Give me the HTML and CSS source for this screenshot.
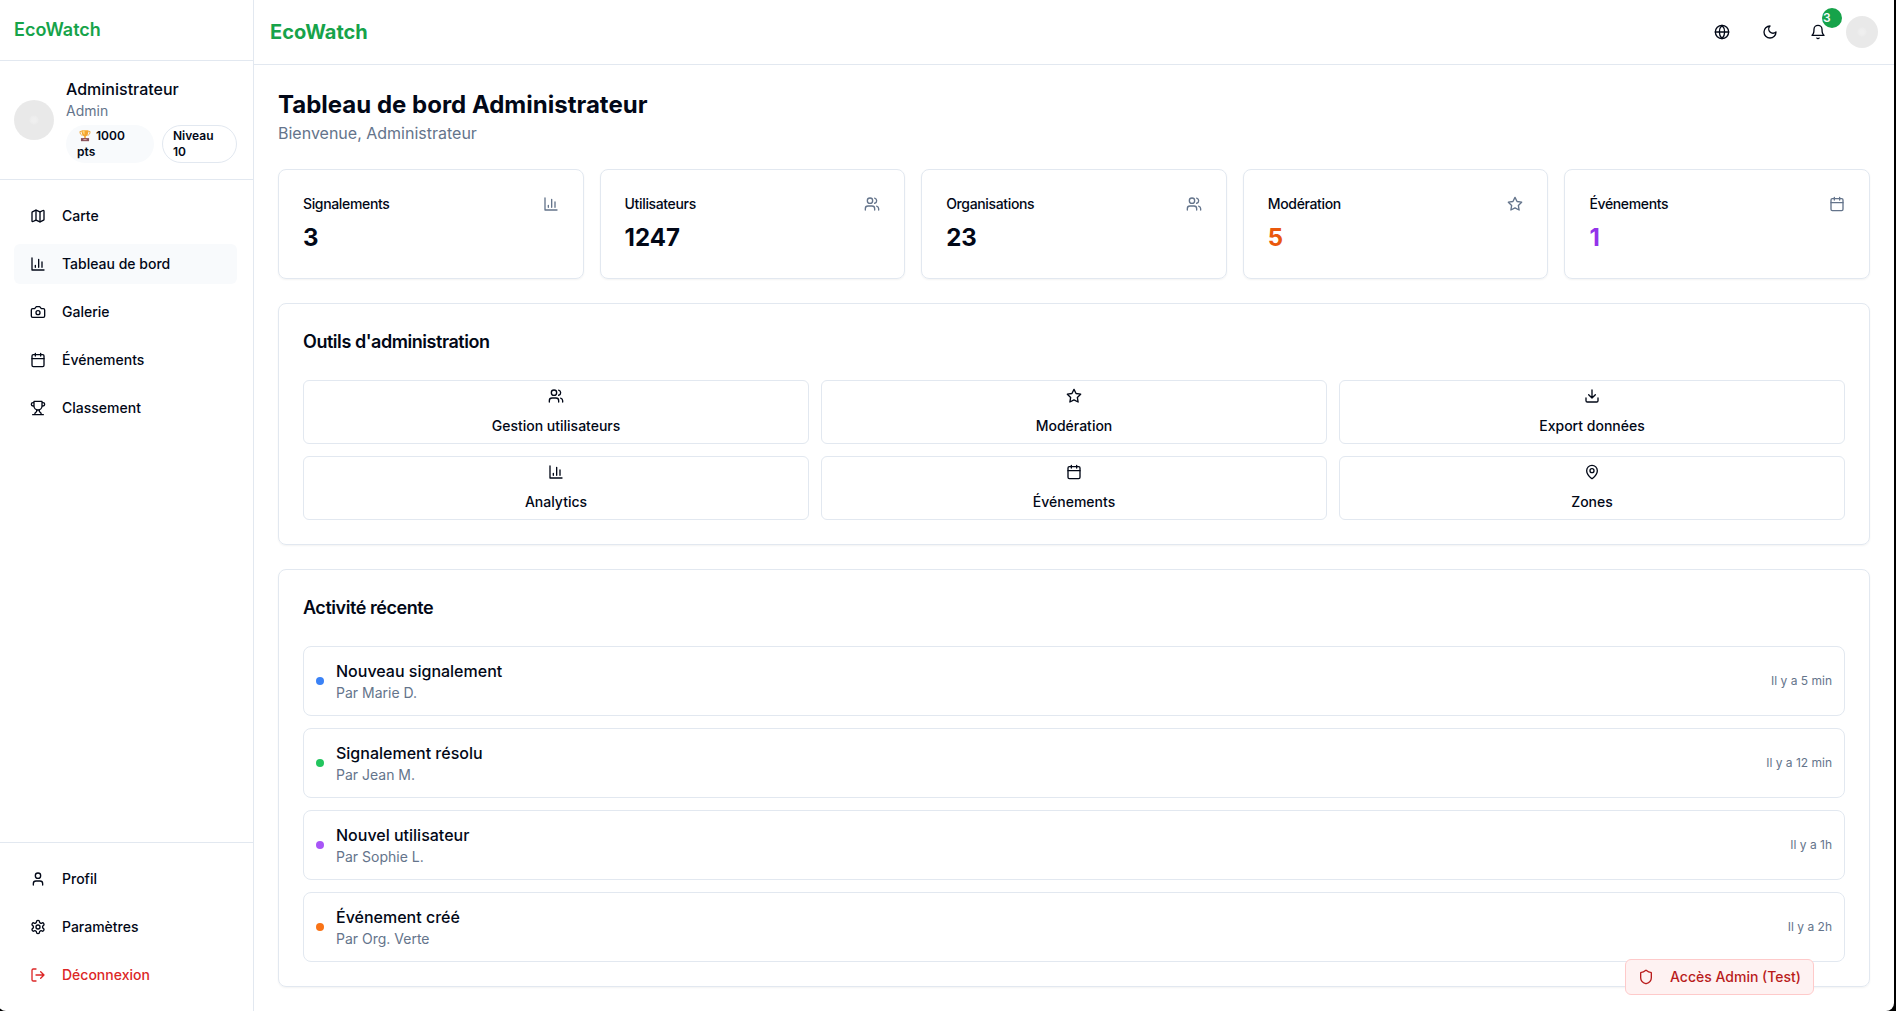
FILE: index.html
```html
<!DOCTYPE html>
<html lang="fr">
<head>
<meta charset="utf-8">
<title>EcoWatch</title>
<link rel="stylesheet" href="styles.css">
</head>
<body>
<svg class="sprite" aria-hidden="true">
  <symbol id="map" viewBox="0 0 24 24"><path d="M14.106 5.553a2 2 0 0 0 1.788 0l3.659-1.83A1 1 0 0 1 21 4.619v12.764a1 1 0 0 1-.553.894l-4.553 2.277a2 2 0 0 1-1.788 0l-4.212-2.106a2 2 0 0 0-1.788 0l-3.659 1.83A1 1 0 0 1 3 19.381V6.618a1 1 0 0 1 .553-.894l4.553-2.277a2 2 0 0 1 1.788 0z"/><path d="M15 5.764v15M9 3.236v15"/></symbol>
  <symbol id="chart" viewBox="0 0 24 24"><path d="M3 3v18h18M18 17V9M13 17V5M8 17v-3"/></symbol>
  <symbol id="camera" viewBox="0 0 24 24"><path d="M14.5 4h-5L7 7H4a2 2 0 0 0-2 2v9a2 2 0 0 0 2 2h16a2 2 0 0 0 2-2V9a2 2 0 0 0-2-2h-3l-2.500-3z"/><circle cx="12" cy="13" r="3"/></symbol>
  <symbol id="calendar" viewBox="0 0 24 24"><path d="M8 2v4M16 2v4"/><rect width="18" height="18" x="3" y="4" rx="2"/><path d="M3 10h18"/></symbol>
  <symbol id="trophy" viewBox="0 0 24 24"><path d="M6 9H4.500a2.500 2.500 0 0 1 0-5H6M18 9h1.500a2.500 2.500 0 0 0 0-5H18M4 22h16M10 14.660V17c0 .55-.47.98-.97 1.210C7.850 18.750 7 20.240 7 22M14 14.660V17c0 .55.47.98.97 1.210C16.150 18.750 17 20.240 17 22M18 2H6v7a6 6 0 0 0 12 0V2Z"/></symbol>
  <symbol id="user" viewBox="0 0 24 24"><path d="M19 21v-2a4 4 0 0 0-4-4H9a4 4 0 0 0-4 4v2"/><circle cx="12" cy="7" r="4"/></symbol>
  <symbol id="settings" viewBox="0 0 24 24"><path d="M12.220 2h-.44a2 2 0 0 0-2 2v.18a2 2 0 0 1-1 1.730l-.43.25a2 2 0 0 1-2 0l-.15-.08a2 2 0 0 0-2.730.73l-.22.38a2 2 0 0 0 .73 2.730l.15.1a2 2 0 0 1 1 1.720v.51a2 2 0 0 1-1 1.740l-.15.09a2 2 0 0 0-.73 2.730l.22.38a2 2 0 0 0 2.730.73l.15-.08a2 2 0 0 1 2 0l.43.25a2 2 0 0 1 1 1.730V20a2 2 0 0 0 2 2h.44a2 2 0 0 0 2-2v-.18a2 2 0 0 1 1-1.730l.43-.25a2 2 0 0 1 2 0l.15.08a2 2 0 0 0 2.730-.73l.22-.39a2 2 0 0 0-.73-2.730l-.15-.08a2 2 0 0 1-1-1.740v-.5a2 2 0 0 1 1-1.740l.15-.09a2 2 0 0 0 .73-2.730l-.22-.38a2 2 0 0 0-2.730-.73l-.15.08a2 2 0 0 1-2 0l-.43-.25a2 2 0 0 1-1-1.730V4a2 2 0 0 0-2-2z"/><circle cx="12" cy="12" r="3"/></symbol>
  <symbol id="logout" viewBox="0 0 24 24"><path d="M9 21H5a2 2 0 0 1-2-2V5a2 2 0 0 1 2-2h4M16 17l5-5-5-5M21 12H9"/></symbol>
  <symbol id="globe" viewBox="0 0 24 24"><circle cx="12" cy="12" r="10"/><path d="M12 2a14.500 14.500 0 0 0 0 20 14.500 14.500 0 0 0 0-20M2 12h20"/></symbol>
  <symbol id="moon" viewBox="0 0 24 24"><path d="M12 3a6 6 0 0 0 9 9 9 9 0 1 1-9-9Z"/></symbol>
  <symbol id="bell" viewBox="0 0 24 24"><path d="M6 8a6 6 0 0 1 12 0c0 7 3 9 3 9H3s3-2 3-9M10.300 21a1.940 1.940 0 0 0 3.400 0"/></symbol>
  <symbol id="users" viewBox="0 0 24 24"><path d="M16 21v-2a4 4 0 0 0-4-4H6a4 4 0 0 0-4 4v2"/><circle cx="9" cy="7" r="4"/><path d="M22 21v-2a4 4 0 0 0-3-3.870M16 3.130a4 4 0 0 1 0 7.750"/></symbol>
  <symbol id="star" viewBox="0 0 24 24"><path d="M12 2l3.090 6.260L22 9.270l-5 4.870 1.180 6.880L12 17.770l-6.180 3.250L7 14.140 2 9.270l6.910-1.010z"/></symbol>
  <symbol id="download" viewBox="0 0 24 24"><path d="M21 15v4a2 2 0 0 1-2 2H5a2 2 0 0 1-2-2v-4M7 10l5 5 5-5M12 15V3"/></symbol>
  <symbol id="pin" viewBox="0 0 24 24"><path d="M20 10c0 4.993-5.539 10.193-7.399 11.799a1 1 0 0 1-1.202 0C9.539 20.193 4 14.993 4 10a8 8 0 0 1 16 0"/><circle cx="12" cy="10" r="3"/></symbol>
  <symbol id="shield" viewBox="0 0 24 24"><path d="M20 13c0 5-3.500 7.500-7.660 8.950a1 1 0 0 1-.67-.01C7.500 20.500 4 18 4 13V6a1 1 0 0 1 1-1c2 0 4.500-1.200 6.240-2.720a1.170 1.170 0 0 1 1.520 0C14.510 3.810 17 5 19 5a1 1 0 0 1 1 1z"/></symbol>
</svg>

<div class="app">
  <aside class="sidebar">
    <div class="sidebar-brand">EcoWatch</div>
    <div class="profile">
      <span class="avatar avatar-md"></span>
      <div class="profile-info">
        <div class="profile-name">Administrateur</div>
        <div class="profile-role">Admin</div>
        <div class="badges">
          <span class="badge badge-points"><svg class="cup" viewBox="0 0 16 16"><path d="M4 3H1.800c0 3 1 4.500 3.200 4.700M12 3h2.200c0 3-1 4.500-3.200 4.700" fill="none" stroke="#eea83c" stroke-width="1.200"/><path d="M3.700 1.500h8.600C12.300 6 11 8.500 9 9v2h1.500v1h-5v-1H7V9C5 8.500 3.700 6 3.700 1.500z" fill="#f5a62f"/><path d="M5 2h2.500v5C5.800 6 5 4.500 5 2z" fill="#ffd578"/><path d="M3 11.200h10V15H3z" fill="#87505b"/><path d="M6 12.300h4v1.400H6z" fill="#d9a3a0"/></svg> 1000 pts</span>
          <span class="badge badge-level">Niveau 10</span>
        </div>
      </div>
    </div>
    <nav class="nav nav-main">
      <a class="nav-item"><svg class="icon"><use href="#map"/></svg>Carte</a>
      <a class="nav-item active"><svg class="icon"><use href="#chart"/></svg>Tableau de bord</a>
      <a class="nav-item"><svg class="icon"><use href="#camera"/></svg>Galerie</a>
      <a class="nav-item"><svg class="icon"><use href="#calendar"/></svg>Événements</a>
      <a class="nav-item"><svg class="icon"><use href="#trophy"/></svg>Classement</a>
    </nav>
    <nav class="nav nav-footer">
      <a class="nav-item"><svg class="icon"><use href="#user"/></svg>Profil</a>
      <a class="nav-item"><svg class="icon"><use href="#settings"/></svg>Paramètres</a>
      <a class="nav-item danger"><svg class="icon"><use href="#logout"/></svg>Déconnexion</a>
    </nav>
  </aside>

  <div class="page">
    <header class="topbar">
      <div class="topbar-brand">EcoWatch</div>
      <div class="topbar-actions">
        <button class="icon-button"><svg class="icon"><use href="#globe"/></svg></button>
        <button class="icon-button"><svg class="icon"><use href="#moon"/></svg></button>
        <button class="icon-button"><svg class="icon"><use href="#bell"/></svg><span class="count">3</span></button>
        <span class="avatar avatar-sm"></span>
      </div>
    </header>

    <main class="content">
      <div class="heading">
        <h1>Tableau de bord Administrateur</h1>
        <p>Bienvenue, Administrateur</p>
      </div>

      <section class="stats">
        <div class="card stat"><div class="stat-head">Signalements<svg class="icon"><use href="#chart"/></svg></div><div class="stat-value">3</div></div>
        <div class="card stat"><div class="stat-head">Utilisateurs<svg class="icon"><use href="#users"/></svg></div><div class="stat-value">1247</div></div>
        <div class="card stat"><div class="stat-head">Organisations<svg class="icon"><use href="#users"/></svg></div><div class="stat-value">23</div></div>
        <div class="card stat"><div class="stat-head">Modération<svg class="icon"><use href="#star"/></svg></div><div class="stat-value orange">5</div></div>
        <div class="card stat"><div class="stat-head">Événements<svg class="icon"><use href="#calendar"/></svg></div><div class="stat-value purple">1</div></div>
      </section>

      <section class="card">
        <h2>Outils d'administration</h2>
        <div class="tools">
          <button class="tool"><svg class="icon"><use href="#users"/></svg>Gestion utilisateurs</button>
          <button class="tool"><svg class="icon"><use href="#star"/></svg>Modération</button>
          <button class="tool"><svg class="icon"><use href="#download"/></svg>Export données</button>
          <button class="tool"><svg class="icon"><use href="#chart"/></svg>Analytics</button>
          <button class="tool"><svg class="icon"><use href="#calendar"/></svg>Événements</button>
          <button class="tool"><svg class="icon"><use href="#pin"/></svg>Zones</button>
        </div>
      </section>

      <section class="card">
        <h2>Activité récente</h2>
        <div class="activity">
          <div class="event"><span class="dot dot-blue"></span><div class="event-text"><div class="event-title">Nouveau signalement</div><div class="event-author">Par Marie D.</div></div><time>Il y a 5 min</time></div>
          <div class="event"><span class="dot dot-green"></span><div class="event-text"><div class="event-title">Signalement résolu</div><div class="event-author">Par Jean M.</div></div><time>Il y a 12 min</time></div>
          <div class="event"><span class="dot dot-purple"></span><div class="event-text"><div class="event-title">Nouvel utilisateur</div><div class="event-author">Par Sophie L.</div></div><time>Il y a 1h</time></div>
          <div class="event"><span class="dot dot-orange"></span><div class="event-text"><div class="event-title">Événement créé</div><div class="event-author">Par Org. Verte</div></div><time>Il y a 2h</time></div>
        </div>
      </section>
    </main>
  </div>
</div>

<button class="admin-access"><svg class="icon"><use href="#shield"/></svg>Accès Admin (Test)</button>
</body>
</html>
```
FILE: styles.css
```css
*,
*::before,
*::after {
  box-sizing: border-box;
}

body {
  margin: 0;
  background: #000;
  color: #020817;
  font-family: Inter, "Liberation Sans", sans-serif;
  font-size: 16px;
  line-height: 24px;
}

h1, h2, p {
  margin: 0;
}

button {
  font: inherit;
  color: inherit;
  background: none;
  border: 0;
  padding: 0;
}

.sprite {
  display: none;
}

.icon {
  width: 16px;
  height: 16px;
  flex: none;
  fill: none;
  stroke: currentColor;
  stroke-width: 2;
  stroke-linecap: round;
  stroke-linejoin: round;
}

.app {
  display: flex;
  width: 1896px;
  height: 1011px;
  margin-left: -2px;
  background: #fff;
  border-radius: 0 0 8px 8px;
  overflow: hidden;
}

/* Sidebar */
.sidebar {
  display: flex;
  flex-direction: column;
  flex: none;
  width: 256px;
  border-right: 1px solid #e2e8f0;
}

.sidebar-brand {
  padding: 16px;
  border-bottom: 1px solid #e2e8f0;
  color: #16a34a;
  font-size: 18px;
  font-weight: 600;
  line-height: 28px;
}

.profile {
  display: flex;
  align-items: center;
  gap: 12px;
  padding: 16px;
  border-bottom: 1px solid #e2e8f0;
}

.avatar {
  flex: none;
  border-radius: 50%;
  background: radial-gradient(circle, #efefef 0 2px, #ececec 4px, #e9e9e9 5px);
}

.avatar-md {
  width: 40px;
  height: 40px;
}

.avatar-sm {
  width: 32px;
  height: 32px;
}

.profile-name {
  font-weight: 500;
}

.profile-role {
  color: #64748b;
  font-size: 14px;
  line-height: 20px;
}

.badges {
  display: flex;
  gap: 8px;
  margin-top: 4px;
}

.badge {
  padding: 2px 10px;
  border: 1px solid transparent;
  border-radius: 19px;
  font-size: 12px;
  font-weight: 600;
  line-height: 16px;
}

.badge-points {
  width: 88px;
  background: #f8fafc;
}

.badge-level {
  width: 75px;
  border-color: #e2e8f0;
}

.cup {
  width: 16px;
  height: 13px;
  vertical-align: -2px;
}

.nav {
  display: flex;
  flex-direction: column;
  gap: 8px;
  padding: 16px;
}

.nav-main {
  flex: 1;
}

.nav-footer {
  border-top: 1px solid #e2e8f0;
}

.nav-item {
  display: flex;
  align-items: center;
  gap: 16px;
  height: 40px;
  padding: 0 16px;
  border-radius: 6px;
  font-size: 14px;
  font-weight: 500;
}

.nav-item.active {
  background: #f8fafc;
}

.nav-item.danger {
  color: #dc2626;
}

/* Top bar */
.page {
  flex: 1;
}

.topbar {
  display: flex;
  align-items: center;
  justify-content: space-between;
  height: 65px;
  padding: 0 16px;
  border-bottom: 1px solid #e2e8f0;
}

.topbar-brand {
  color: #16a34a;
  font-size: 20px;
  font-weight: 700;
  line-height: 28px;
}

.topbar-actions {
  display: flex;
  align-items: center;
  gap: 8px;
}

.icon-button {
  position: relative;
  display: flex;
  align-items: center;
  justify-content: center;
  width: 40px;
  height: 40px;
}

.count {
  position: absolute;
  top: -4px;
  right: -4px;
  width: 20px;
  height: 20px;
  padding: 1px;
  border-radius: 50%;
  background: #16a34a;
  color: #f8fafc;
  font-size: 12px;
  font-weight: 600;
  line-height: 18px;
  text-align: left;
}

/* Dashboard */
.content {
  display: flex;
  flex-direction: column;
  gap: 24px;
  padding: 24px;
}

.heading h1 {
  font-size: 24px;
  font-weight: 700;
  line-height: 32px;
}

.heading p {
  color: #64748b;
}

.card {
  padding: 24px;
  border: 1px solid #e2e8f0;
  border-radius: 8px;
  box-shadow: 0 1px 2px rgba(0, 0, 0, 0.05);
}

.card h2 {
  margin-bottom: 24px;
  font-size: 18px;
  font-weight: 600;
  line-height: 28px;
  letter-spacing: -0.025em;
}

.stats {
  display: grid;
  grid-template-columns: repeat(5, 1fr);
  gap: 16px;
}

.stat-head {
  display: flex;
  align-items: center;
  justify-content: space-between;
  margin-bottom: 8px;
  font-size: 14px;
  font-weight: 500;
  line-height: 20px;
  letter-spacing: -0.025em;
}

.stat-head .icon {
  color: #64748b;
}

.stat-value {
  font-size: 24px;
  font-weight: 700;
  line-height: 32px;
}

.orange {
  color: #ea580c;
}

.purple {
  color: #9333ea;
}

.tools {
  display: grid;
  grid-template-columns: repeat(3, 1fr);
  gap: 12px;
}

.tool {
  display: flex;
  flex-direction: column;
  align-items: center;
  justify-content: center;
  gap: 12px;
  height: 64px;
  border: 1px solid #e2e8f0;
  border-radius: 6px;
  font-size: 14px;
  font-weight: 500;
  line-height: 20px;
}

.activity {
  display: flex;
  flex-direction: column;
  gap: 12px;
}

.event {
  display: flex;
  align-items: center;
  gap: 12px;
  padding: 12px;
  border: 1px solid #e2e8f0;
  border-radius: 8px;
}

.dot {
  width: 8px;
  height: 8px;
  border-radius: 50%;
}

.dot-blue { background: #3b82f6; }
.dot-green { background: #22c55e; }
.dot-purple { background: #a855f7; }
.dot-orange { background: #f97316; }

.event-text {
  flex: 1;
}

.event-title {
  font-weight: 500;
}

.event-author {
  color: #64748b;
  font-size: 14px;
  line-height: 20px;
}

.event time {
  color: #64748b;
  font-size: 12px;
  line-height: 16px;
}

/* Floating shortcut */
.admin-access {
  position: fixed;
  right: 82px;
  bottom: 16px;
  display: flex;
  align-items: center;
  gap: 16px;
  height: 36px;
  padding: 0 12px;
  border: 1px solid #fecaca;
  border-radius: 6px;
  background: #fef2f2;
  color: #b91c1c;
  font-size: 14px;
  font-weight: 500;
}
```
